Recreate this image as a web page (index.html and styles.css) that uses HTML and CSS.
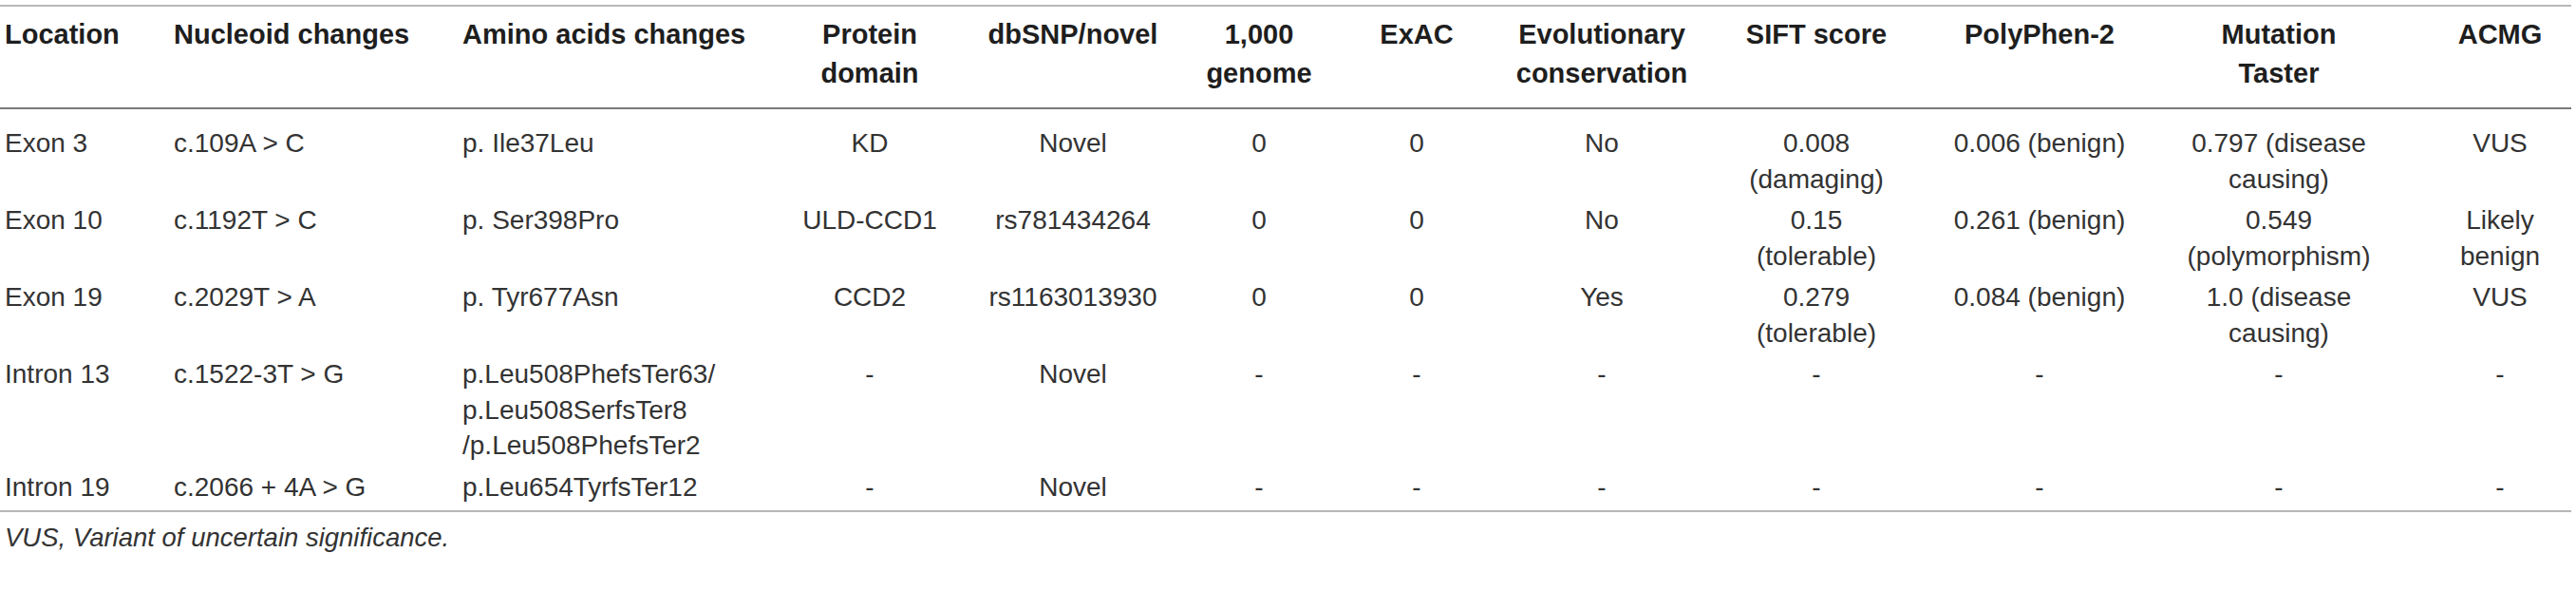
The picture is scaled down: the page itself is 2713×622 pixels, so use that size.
FILE: index.html
```html
<!DOCTYPE html>
<html>
<head>
<meta charset="utf-8">
<link rel="stylesheet" href="styles.css">
</head>
<body>
<div class="wrap">
<table class="vt">
  <colgroup>
    <col class="c1"><col class="c2"><col class="c3"><col class="c4"><col class="c5"><col class="c6">
    <col class="c7"><col class="c8"><col class="c9"><col class="c10"><col class="c11"><col class="c12">
  </colgroup>
  <thead>
    <tr>
      <th class="l">Location</th>
      <th class="l">Nucleoid changes</th>
      <th class="l">Amino acids changes</th>
      <th>Protein<br>domain</th>
      <th>dbSNP/novel</th>
      <th>1,000<br>genome</th>
      <th>ExAC</th>
      <th>Evolutionary<br>conservation</th>
      <th>SIFT score</th>
      <th>PolyPhen-2</th>
      <th>Mutation<br>Taster</th>
      <th class="last">ACMG</th>
    </tr>
  </thead>
  <tbody>
    <tr class="first">
      <td class="l">Exon 3</td>
      <td class="l">c.109A &gt; C</td>
      <td class="l">p. Ile37Leu</td>
      <td>KD</td>
      <td>Novel</td>
      <td>0</td>
      <td>0</td>
      <td>No</td>
      <td>0.008<br>(damaging)</td>
      <td>0.006 (benign)</td>
      <td>0.797 (disease<br>causing)</td>
      <td class="last">VUS</td>
    </tr>
    <tr>
      <td class="l">Exon 10</td>
      <td class="l">c.1192T &gt; C</td>
      <td class="l">p. Ser398Pro</td>
      <td>ULD-CCD1</td>
      <td>rs781434264</td>
      <td>0</td>
      <td>0</td>
      <td>No</td>
      <td>0.15<br>(tolerable)</td>
      <td>0.261 (benign)</td>
      <td>0.549<br>(polymorphism)</td>
      <td class="last">Likely<br>benign</td>
    </tr>
    <tr>
      <td class="l">Exon 19</td>
      <td class="l">c.2029T &gt; A</td>
      <td class="l">p. Tyr677Asn</td>
      <td>CCD2</td>
      <td>rs1163013930</td>
      <td>0</td>
      <td>0</td>
      <td>Yes</td>
      <td>0.279<br>(tolerable)</td>
      <td>0.084 (benign)</td>
      <td>1.0 (disease<br>causing)</td>
      <td class="last">VUS</td>
    </tr>
    <tr>
      <td class="l">Intron 13</td>
      <td class="l">c.1522-3T &gt; G</td>
      <td class="l">p.Leu508PhefsTer63/<br>p.Leu508SerfsTer8<br>/p.Leu508PhefsTer2</td>
      <td>-</td>
      <td>Novel</td>
      <td>-</td>
      <td>-</td>
      <td>-</td>
      <td>-</td>
      <td>-</td>
      <td>-</td>
      <td class="last">-</td>
    </tr>
    <tr class="end">
      <td class="l">Intron 19</td>
      <td class="l">c.2066 + 4A &gt; G</td>
      <td class="l">p.Leu654TyrfsTer12</td>
      <td>-</td>
      <td>Novel</td>
      <td>-</td>
      <td>-</td>
      <td>-</td>
      <td>-</td>
      <td>-</td>
      <td>-</td>
      <td class="last">-</td>
    </tr>
  </tbody>
</table>
<p class="note">VUS, Variant of uncertain significance.</p>
</div>
</body>
</html>
```

FILE: styles.css
```css
html, body {
  margin: 0;
  padding: 0;
  background: #ffffff;
}

body {
  font-family: "Liberation Sans", Arial, sans-serif;
  color: #333333;
}

.wrap {
  width: 2708px;
  padding-top: 5px;
}

.vt {
  width: 2708px;
  border-collapse: collapse;
  table-layout: fixed;
  border-top: 2px solid #b8b8b8;
  border-bottom: 2px solid #b8b8b8;
}

.c1 { width: 178px; }
.c2 { width: 304px; }
.c3 { width: 348px; }
.c4 { width: 172px; }
.c5 { width: 256px; }
.c6 { width: 136px; }
.c7 { width: 196px; }
.c8 { width: 194px; }
.c9 { width: 258px; }
.c10 { width: 212px; }
.c11 { width: 292px; }
.c12 { width: 162px; }

.vt th {
  font-size: 29px;
  font-weight: bold;
  line-height: 41px;
  color: #1e1e1e;
  text-align: center;
  vertical-align: top;
  padding: 9px 5px 15px 5px;
  border-bottom: 2px solid #7a7a7a;
  white-space: nowrap;
}

.vt td {
  font-size: 28px;
  line-height: 37.5px;
  text-align: center;
  vertical-align: top;
  padding: 3px 5px;
  white-space: nowrap;
}

.vt .l {
  text-align: left;
}

.vt .last {
  padding-left: 17px;
}

.vt tr.first td {
  padding-top: 17px;
}

.vt tr.end td {
  padding-bottom: 6px;
}

.note {
  margin: 0;
  padding: 8px 5px 0 5px;
  font-size: 27.5px;
  line-height: 37.5px;
  font-style: italic;
  color: #333333;
}
```
